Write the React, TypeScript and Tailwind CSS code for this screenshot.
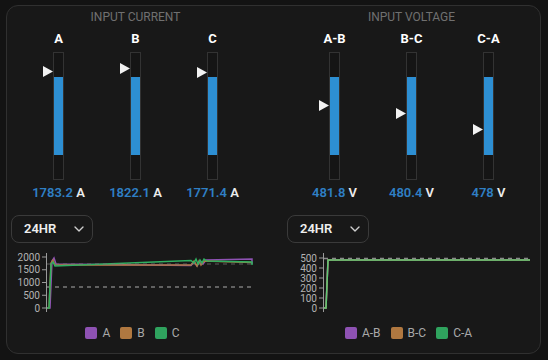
import { ChevronDown } from "lucide-react";

type Meter = { label: string; value: string; unit: string; marker: number };

const current: Meter[] = [
  { label: "A", value: "1783.2", unit: "A", marker: 13 },
  { label: "B", value: "1822.1", unit: "A", marker: 10 },
  { label: "C", value: "1771.4", unit: "A", marker: 14 },
];

const voltage: Meter[] = [
  { label: "A-B", value: "481.8", unit: "V", marker: 47 },
  { label: "B-C", value: "480.4", unit: "V", marker: 55 },
  { label: "C-A", value: "478", unit: "V", marker: 71 },
];

function Bar({ m }: { m: Meter }) {
  return (
    <div className="flex w-[77px] flex-col items-center">
      <div className="text-[13px] font-bold leading-[16px] text-white">{m.label}</div>
      <div className="relative mt-[5px] h-[128px] w-[11px] border border-[#333333] bg-[#151515]">
        <div className="absolute left-0 right-0 top-[24px] h-[78px] bg-[#2d8fd3]" />
        <svg className="absolute left-[-11px]" style={{ top: m.marker }} width="10" height="11" viewBox="0 0 10 11">
          <polygon points="0,0 10,5.5 0,11" fill="#f2f2f2" />
        </svg>
      </div>
      <div className="mt-[5px] text-[13px] font-semibold leading-[16px]">
        <span className="text-[#2f7fc4]">{m.value}</span>
        <span className="text-[#ececec]"> {m.unit}</span>
      </div>
    </div>
  );
}

function Dropdown() {
  return (
    <div className="flex h-[28px] w-[82px] items-center justify-between rounded-[8px] border border-[#3a3a3a] pl-[12px] pr-[5px]">
      <span className="text-[13px] font-semibold text-[#eeeeee]">24HR</span>
      <ChevronDown size={16} strokeWidth={2} className="text-[#cfcfcf]" />
    </div>
  );
}

function Legend({ items }: { items: string[] }) {
  const colors = ["bg-[#8e52b3]", "bg-[#b07840]", "bg-[#2fa35e]"];
  return (
    <div className="mt-[11px] flex justify-center gap-[10px] pr-[6px]">
      {items.map((t, i) => (
        <div key={t} className="flex items-center gap-[5px]">
          <div className={`h-[12px] w-[12px] rounded-[2px] ${colors[i]}`} />
          <span className="text-[12px] leading-[12px] text-[#a8a8a8]">{t}</span>
        </div>
      ))}
    </div>
  );
}

function CurrentChart() {
  const ticks = [2000, 1500, 1000, 500, 0];
  const y = (v: number) => 58 - v * 0.0255;
  return (
    <svg width="249" height="66" className="mt-[7px]">
      {ticks.map((t) => (
        <g key={t}>
          <text x="29" y={y(t) + 3.5} fontSize="10" textAnchor="end" fill="#b3b3b3">{t}</text>
          <line x1="31" x2="35" y1={y(t)} y2={y(t)} stroke="#9a9a9a" />
        </g>
      ))}
      <line x1="35.5" x2="35.5" y1="3" y2="62" stroke="#9a9a9a" />
      <line x1="36" x2="241" y1="37" y2="37" stroke="#7a7a7a" strokeWidth="1.5" strokeDasharray="4 4" />
      <polyline fill="none" stroke="#8e52b3" strokeWidth="1.5" points="36,58 39,58 41,11 43,8 45,14 180,15.5 183,12 186,16 189,11 192,14 195,10 241,9 241,14" />
      <polyline fill="none" stroke="#b07840" strokeWidth="1.5" points="36,58 38,58 40,13 42,10 44,15 180,15 183,11 186,16 188,11 190,15 193,11 241,12.5" />
      <polyline fill="none" stroke="#2fb060" strokeWidth="1.5" points="36,58 38,58 40,14 42,12 44,16 180,10.5 183,13 185,9 187,14 189,10 191,13 193,9 196,11 241,12 241,15" />
      <line x1="36" x2="241" y1="14" y2="14" stroke="#7a7a7a" strokeWidth="1.2" strokeDasharray="4 4" opacity="0.7" />
    </svg>
  );
}

function VoltageChart() {
  const ticks = [500, 400, 300, 200, 100, 0];
  const y = (v: number) => 58 - v * 0.1;
  return (
    <svg width="249" height="66" className="mt-[7px]">
      {ticks.map((t) => (
        <g key={t}>
          <text x="30" y={y(t) + 3.5} fontSize="10" textAnchor="end" fill="#b3b3b3">{t}</text>
          <line x1="32" x2="36" y1={y(t)} y2={y(t)} stroke="#9a9a9a" />
        </g>
      ))}
      <line x1="36.5" x2="36.5" y1="3" y2="62" stroke="#9a9a9a" />
      <polyline fill="none" stroke="#8e52b3" strokeWidth="1.5" points="37,58 39,58 41,10 243,10" />
      <polyline fill="none" stroke="#b07840" strokeWidth="1.5" points="37,58 39,58 41,10 243,10" />
      <polyline fill="none" stroke="#5cc874" strokeWidth="1.5" points="37,58 39,58 41,10 243,10" />
      <line x1="37" x2="243" y1="8.5" y2="8.5" stroke="#8a8a8a" strokeWidth="1.5" strokeDasharray="4 4" />
    </svg>
  );
}

function Section({ title, meters, chart, legend }: { title: string; meters: Meter[]; chart: React.ReactNode; legend: string[] }) {
  return (
    <div className="flex w-[249px] flex-col">
      <div className="text-center text-[12px] leading-[16px] text-[#707070]">{title}</div>
      <div className="mt-[6px] flex justify-center">
        {meters.map((m) => (
          <Bar key={m.label} m={m} />
        ))}
      </div>
      <div className="mt-[14px]">
        <Dropdown />
      </div>
      {chart}
      <Legend items={legend} />
    </div>
  );
}

export default function App() {
  return (
    <div className="h-[360px] w-[548px] bg-[#131313] pl-[6px] pt-[5px] font-['Roboto',sans-serif]">
      <div className="flex h-[349px] w-[535px] gap-[27px] rounded-[12px] border border-[#303030] bg-[#181818] px-[4px] pt-[3px]">
        <Section title="INPUT CURRENT" meters={current} chart={<CurrentChart />} legend={["A", "B", "C"]} />
        <Section title="INPUT VOLTAGE" meters={voltage} chart={<VoltageChart />} legend={["A-B", "B-C", "C-A"]} />
      </div>
    </div>
  );
}
